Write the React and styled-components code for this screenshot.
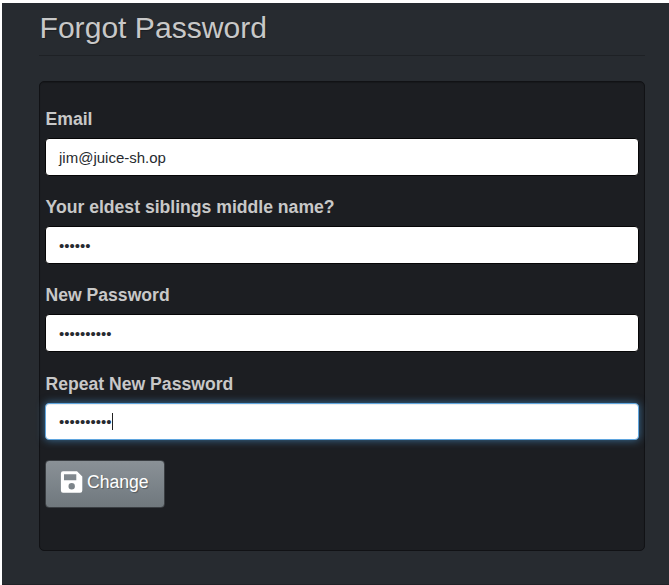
import React from "react";
import styled, { createGlobalStyle, css } from "styled-components";

const GlobalStyle = createGlobalStyle`
  * { box-sizing: border-box; }
  body {
    margin: 0;
    background: #fff;
    font-family: "Liberation Sans", Arial, sans-serif;
    color: #c8c8c8;
  }
`;

const Page = styled.main`
  height: 585px;
  padding: 3px 0 0 2px;
  overflow: hidden;
`;

const Content = styled.div`
  height: 582px;
  padding: 7px 24px 0 37px;
  background: #272b30;
  border-bottom: 1px solid #202227;
`;

const Title = styled.h1`
  height: 46px;
  margin: 0 0 25px;
  padding-left: 0.5px;
  font-size: 30.1px;
  font-weight: 400;
  line-height: 36px;
  text-shadow: 1px 1px 1px rgba(0, 0, 0, 0.3);
  border-bottom: 1px solid #1e2125;
`;

const Well = styled.form`
  height: 470px;
  padding: 24px 5px 0;
  background: #1c1e22;
  border: 1px solid #111215;
  border-radius: 5px;
  box-shadow: inset 0 1px 1px rgba(0, 0, 0, 0.2);
`;

const Group = styled.div`
  height: 88.2px;
`;

const Label = styled.div`
  height: 32px;
  padding: 1px 0 0 0.5px;
  font-size: 17.6px;
  font-weight: 700;
  line-height: 25px;
`;

const Input = styled.div`
  display: flex;
  align-items: center;
  width: 594px;
  height: 38px;
  padding: 1px 13px 0;
  background: #fff;
  color: #272b30;
  font-size: 15px;
  border: 1px solid #060607;
  border-radius: 4px;
  ${({ $focused }) =>
    $focused &&
    css`
      height: 37px;
      padding-top: 0;
      border-color: #5fa5de;
      box-shadow: inset 0 1px 1px rgba(0, 0, 0, 0.075),
        0 0 9px rgba(82, 168, 236, 0.6);
    `}
`;

const Caret = styled.span`
  width: 1px;
  height: 17px;
  background: #222;
`;

const Button = styled.button`
  display: flex;
  align-items: center;
  width: 120px;
  height: 48px;
  margin: 1px 0 0;
  padding: 0 0 3px 14px;
  gap: 3px;
  color: #fff;
  font-family: inherit;
  font-size: 17.6px;
  text-shadow: 1px 1px 1px rgba(0, 0, 0, 0.3);
  background: linear-gradient(#8a9196, #7a8288 60%, #70787d);
  border: 1px solid #3a3e42;
  border-radius: 4px;
`;

const SaveIcon = () => (
  <svg width="24" height="24" viewBox="0 0 24 24" aria-hidden="true">
    <path
      fill="#fff"
      fillRule="evenodd"
      d="M3 1.2H17L22.3 6.5V20.6Q22.3 22.8 20.1 22.8H3Q.9 22.8 .9 20.6V3.4Q.9 1.2 3 1.2ZM4 4.3V10.2H16.3V4.3ZM11.7 13.1A3.2 3.2 0 1 0 11.7 19.5A3.2 3.2 0 1 0 11.7 13.1Z"
    />
  </svg>
);

const fields = [
  { label: "Email", value: "jim@juice-sh.op" },
  { label: "Your eldest siblings middle name?", value: "••••••" },
  { label: "New Password", value: "••••••••••" },
  { label: "Repeat New Password", value: "••••••••••", focused: true },
];

export default function App() {
  return (
    <Page>
      <GlobalStyle />
      <Content>
        <Title>Forgot Password</Title>
        <Well>
          {fields.map(({ label, value, focused }) => (
            <Group key={label}>
              <Label>{label}</Label>
              <Input $focused={focused}>
                <span>{value}</span>
                {focused && <Caret />}
              </Input>
            </Group>
          ))}
          <Button type="button">
            <SaveIcon />
            <span>Change</span>
          </Button>
        </Well>
      </Content>
    </Page>
  );
}
